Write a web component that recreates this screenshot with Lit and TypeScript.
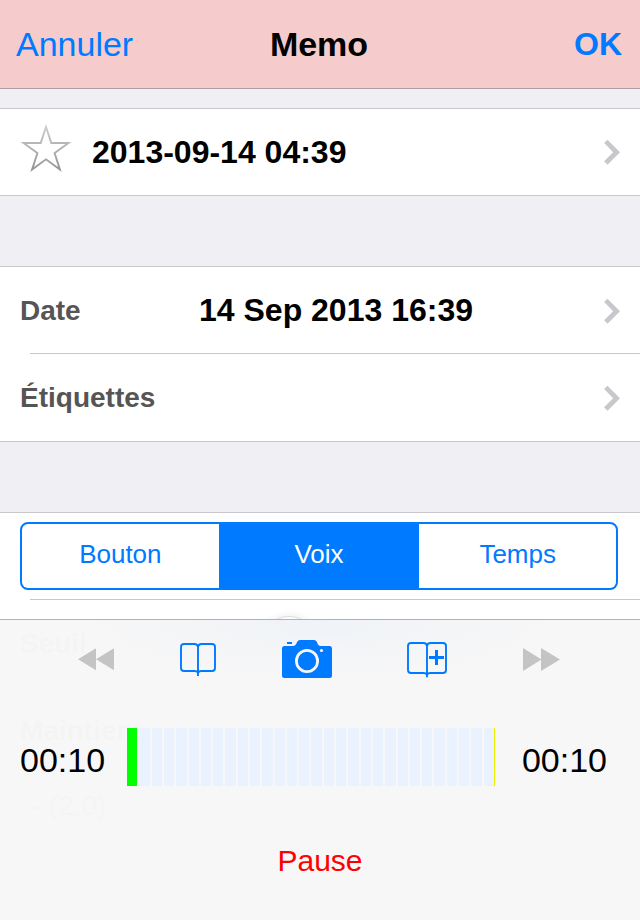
import { LitElement, html, css } from "lit";
import { customElement, state } from "lit/decorators.js";
import { classMap } from "lit/directives/class-map.js";

const chevron = html`<svg class="chevron" width="16" height="26" viewBox="0 0 16 26" aria-hidden="true">
  <path d="M1.8 2.4L12.6 13.2L1.8 24" fill="none" stroke="#c7c7cc" stroke-width="4.8" />
</svg>`;

const star = html`<svg width="52" height="56" viewBox="-1 0 52 56" aria-hidden="true">
  <defs>
    <linearGradient id="fade" gradientUnits="userSpaceOnUse" x1="0" y1="0" x2="0" y2="48">
      <stop offset="0" stop-color="#cfcfcf" />
      <stop offset="1" stop-color="#929292" />
    </linearGradient>
  </defs>
  <path
    d="M25 3L30.3 19H47.5L33.6 29.1L38.9 45.5L25 35.35L11.1 45.5L16.4 29.1L2.5 19H19.7Z"
    fill="none" stroke="url(#fade)" stroke-width="1.9"
  />
</svg>`;

const rewind = html`<svg width="36" height="24" viewBox="0 0 36 24" aria-hidden="true">
  <path d="M0 11.2L18 .2V22.2ZM18 11.2L36 .2V22.2Z" fill="#c4c4c4" />
</svg>`;

const forward = html`<svg width="37" height="24" viewBox="0 0 37 24" aria-hidden="true">
  <path d="M0 0L18.5 11.5L0 23ZM18 0L37 11.5L18 23Z" fill="#c4c4c4" />
</svg>`;

const book = html`<svg width="36" height="34" viewBox="0 0 36 34" aria-hidden="true">
  <path
    d="M18 3.6Q17.2 1 14.5 1H4Q1 1 1 4V25Q1 28 4 28H14.5Q17.4 28 18 30Q18.6 28 21.5 28H32Q35 28 35 25V4Q35 1 32 1H21.5Q18.8 1 18 3.6ZM18 2.5V33"
    fill="none" stroke="#007aff" stroke-width="1.9"
  />
</svg>`;

const bookPlus = html`<svg width="40" height="36" viewBox="0 0 40 36" aria-hidden="true">
  <path
    d="M20 3.6Q19.2 1 16.5 1H4Q1 1 1 4V28Q1 31 4 31H16.5Q19.4 31 20 33Q20.6 31 23.5 31H36Q39 31 39 28V4Q39 1 36 1H23.5Q20.8 1 20 3.6ZM20 2.5V35"
    fill="none" stroke="#007aff" stroke-width="1.9"
  />
  <path d="M22 15.5H37M29.5 8V23" stroke="#007aff" stroke-width="3" />
</svg>`;

const camera = html`<svg width="50" height="40" viewBox="0 0 50 40" aria-hidden="true">
  <path
    d="M2.5 6H11Q13.2 6 14.3 3.8L15.2 1.8Q16 0 18 0H32Q34 0 34.8 1.8L35.7 4Q36.6 6 38.5 6H47.5Q50 6 50 8.5V35.5Q50 38 47.5 38H2.5Q0 38 0 35.5V8.5Q0 6 2.5 6Z"
    fill="#007aff"
  />
  <rect x="5" y="2" width="5" height="2" fill="#007aff" />
  <circle cx="25" cy="21" r="10.6" fill="none" stroke="#f7f7f7" stroke-width="2.8" />
  <circle cx="39.5" cy="10.5" r="1.6" fill="#f7f7f7" />
</svg>`;

const MODES = ["Bouton", "Voix", "Temps"];
const SEGMENTS = Array.from({ length: 30 }, (_, i) => i);

@customElement("app-root")
export class AppRoot extends LitElement {
  @state() private mode = "Voix";
  @state() private level = 1;

  static styles = css`
    :host {
      display: block;
      position: relative;
      min-height: 100vh;
      overflow: hidden;
      background: #efeff4;
      color: #000;
      font-family: "Liberation Sans", Arial, Helvetica, sans-serif;
    }
    * {
      box-sizing: border-box;
    }
    button {
      margin: 0;
      padding: 0;
      border: 0;
      background: none;
      color: inherit;
      font: inherit;
      cursor: pointer;
    }
    svg {
      display: block;
      flex: none;
    }
    .navbar {
      display: grid;
      grid-template-columns: 1fr auto 1fr;
      align-items: center;
      height: 89px;
      padding: 0 18px 0 16px;
      border-bottom: 1px solid #a8a0a4;
      background: #f5cbcc;
      font-size: 34px;
      line-height: 40px;
    }
    .navbar h1 {
      margin: 0;
      font-size: inherit;
    }
    .cancel {
      justify-self: start;
      color: #007aff;
    }
    .done {
      justify-self: end;
      color: #007aff;
      font-size: 32px;
      font-weight: bold;
    }
    .form {
      display: flex;
      flex-direction: column;
      gap: 70px;
      padding-top: 19px;
    }
    .group {
      border: solid #c8c7cc;
      border-width: 1px 0;
      background: #fff;
    }
    .row {
      display: flex;
      align-items: center;
      width: 100%;
      height: 87px;
      padding: 0 20px;
      text-align: left;
      font-size: 32px;
      font-weight: bold;
    }
    .headline {
      height: 86px;
      gap: 20px;
    }
    .divider {
      height: 1px;
      margin: -1px 0 0 30px;
      background: #c8c7cc;
    }
    .label {
      width: 179px;
      color: #555;
      font-size: 28px;
      font-weight: bold;
    }
    .chevron {
      margin-left: auto;
    }
    .modes {
      padding: 9px 22px 10px 20px;
    }
    .segmented {
      display: grid;
      grid-template-columns: repeat(3, 1fr);
      gap: 2px;
      height: 68px;
      border: 2px solid #007aff;
      border-radius: 8px;
      overflow: hidden;
      background: #007aff;
    }
    .segment {
      padding-bottom: 4px;
      background: #fff;
      color: #007aff;
      font-size: 26px;
    }
    .segment.on {
      background: #007aff;
      color: #fff;
    }
    .slider {
      flex: 1;
      height: 56px;
      margin: 0;
      appearance: none;
      background: none;
    }
    .slider::-webkit-slider-thumb {
      appearance: none;
      width: 56px;
      height: 56px;
      border: 1px solid #ddd;
      border-radius: 50%;
      background: #fff;
      box-shadow: 0 4px 12px rgba(0, 0, 0, 0.2);
    }
    .note {
      margin: 0;
      padding: 15px 32px;
      color: #666;
      font-size: 28px;
      line-height: 32px;
    }
    .player {
      position: absolute;
      right: 0;
      bottom: 0;
      left: 0;
      border-top: 1px solid #b2b2b2;
      background: radial-gradient(ellipse 240px 60px at 50% 0, rgba(0, 122, 255, 0.03), transparent),
        rgba(247, 247, 247, 0.985);
    }
    .tools {
      display: flex;
      align-items: center;
      justify-content: space-between;
      height: 80px;
      padding: 0 80px 0 78px;
    }
    .wide {
      padding-right: 10px;
    }
    .progress {
      display: flex;
      align-items: flex-end;
      margin-top: 28px;
      padding: 0 33px 0 20px;
      font-size: 34px;
      line-height: 52px;
    }
    .meter {
      flex: 1;
      display: grid;
      grid-template-columns: repeat(30, 1fr);
      gap: 2px;
      height: 58px;
      margin: 0 27px 0 22px;
      border-right: 1px solid #eef000;
    }
    .tick {
      background: #eaf1ff;
    }
    .tick.lit {
      background: #0f0;
    }
    .pause {
      display: block;
      margin: 55px auto 39px;
      color: #f00;
      font-size: 30px;
      line-height: 40px;
    }
  `;

  render() {
    return html`
      <header class="navbar">
        <button class="cancel">Annuler</button>
        <h1>Memo</h1>
        <button class="done">OK</button>
      </header>

      <main class="form">
        <section class="group">
          <button class="row headline">${star}<span>2013-09-14 04:39</span>${chevron}</button>
        </section>

        <section class="group">
          <button class="row"><span class="label">Date</span><span>14 Sep 2013 16:39</span>${chevron}</button>
          <div class="divider"></div>
          <button class="row"><span class="label">Étiquettes</span>${chevron}</button>
        </section>

        <div>
          <section class="group">
            <div class="modes">
              <div class="segmented" role="group" aria-label="Mode">
                ${MODES.map(
                  (name) => html`<button
                    class=${classMap({ segment: true, on: name === this.mode })}
                    aria-pressed=${name === this.mode}
                    @click=${() => (this.mode = name)}
                  >${name}</button>`
                )}
              </div>
            </div>
            <div class="divider"></div>
            <div class="row">
              <label class="label" for="threshold">Seuil</label>
              <input class="slider" id="threshold" type="range" min="0" max="100" value="17" />
            </div>
            <div class="row"><span class="label">Maintient</span></div>
          </section>
          <p class="note">- (2.0)</p>
        </div>
      </main>

      <footer class="player">
        <div class="tools">
          <button aria-label="Reculer">${rewind}</button>
          <button aria-label="Signets">${book}</button>
          <button class="wide" aria-label="Photo">${camera}</button>
          <button class="wide" aria-label="Ajouter un signet">${bookPlus}</button>
          <button aria-label="Avancer">${forward}</button>
        </div>
        <div class="progress">
          <span>00:10</span>
          <div class="meter">
            ${SEGMENTS.map((i) => html`<span class=${classMap({ tick: true, lit: i < this.level })}></span>`)}
          </div>
          <span>00:10</span>
        </div>
        <button class="pause">Pause</button>
      </footer>
    `;
  }
}
